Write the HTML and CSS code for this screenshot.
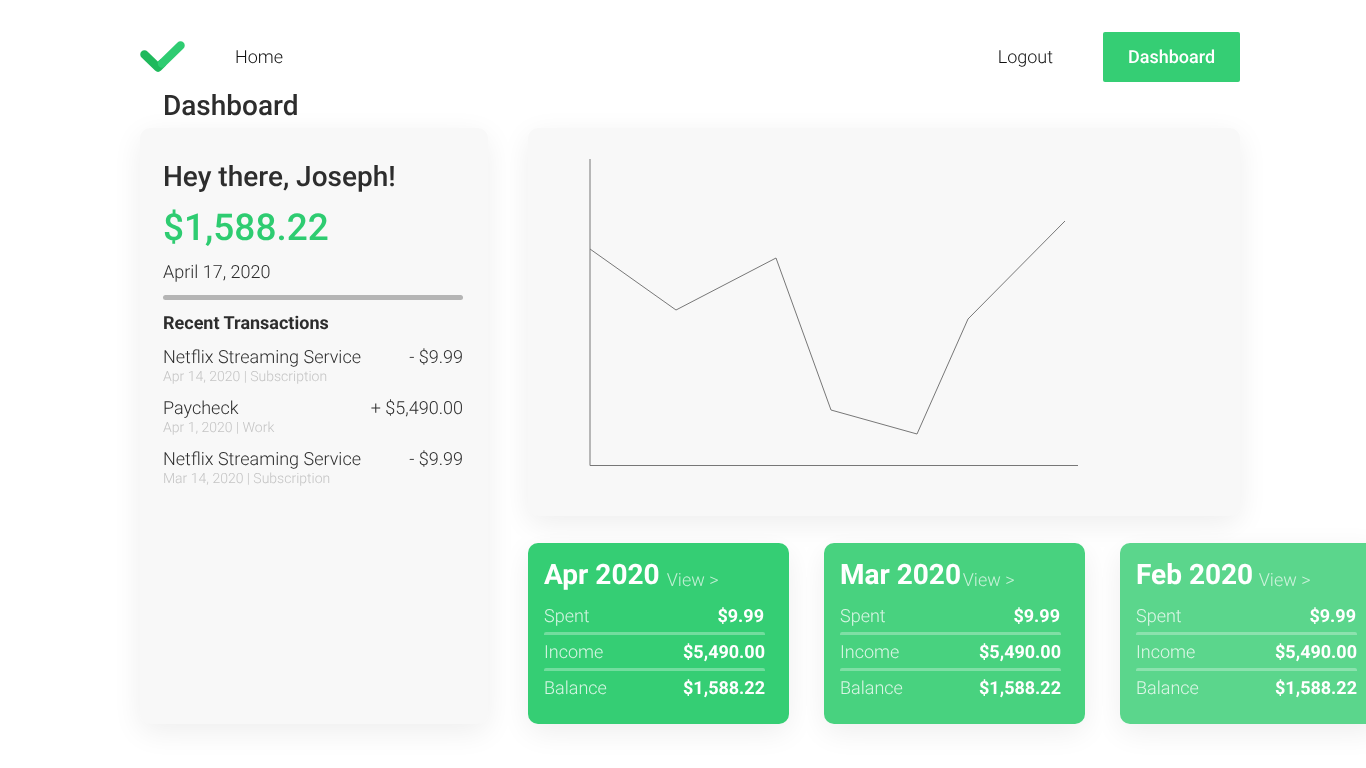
FILE: index.html
```html
<!DOCTYPE html>
<html lang="en">
<head>
    <meta charset="UTF-8">
    <meta name="viewport" content="width=device-width, initial-scale=1.0">
    <title>Dashboard</title>
    <link rel="stylesheet" href="styles.css">
</head>
<body>
    <div class="page">
        <!-- Top navigation -->
        <nav class="nav">
            <svg class="logo" width="45" height="32" viewBox="0 0 45 32">
                <path d="M4.5 14.5 L18 27.5 L22 23.5" fill="none" stroke="#1fb95c" stroke-width="8.5" stroke-linecap="round" stroke-linejoin="round"/>
                <path d="M22 23.5 L40.5 5.5" fill="none" stroke="#2ecc71" stroke-width="8.5" stroke-linecap="round"/>
            </svg>
            <a class="nav-link" href="#">Home</a>
            <a class="nav-link logout" href="#">Logout</a>
            <a class="nav-button" href="#">Dashboard</a>
        </nav>

        <h1 class="page-title">Dashboard</h1>

        <div class="columns">
            <!-- Left summary -->
            <section class="card summary">
                <h2 class="greeting">Hey there, Joseph!</h2>
                <div class="total">$1,588.22</div>
                <div class="date">April 17, 2020</div>
                <div class="rule"></div>
                <h3 class="recent">Recent Transactions</h3>
                <div class="transaction">
                    <div class="transaction-row"><span>Netflix Streaming Service</span><span>- $9.99</span></div>
                    <div class="transaction-meta">Apr 14, 2020 | Subscription</div>
                </div>
                <div class="transaction">
                    <div class="transaction-row"><span>Paycheck</span><span>+ $5,490.00</span></div>
                    <div class="transaction-meta">Apr 1, 2020 | Work</div>
                </div>
                <div class="transaction">
                    <div class="transaction-row"><span>Netflix Streaming Service</span><span>- $9.99</span></div>
                    <div class="transaction-meta">Mar 14, 2020 | Subscription</div>
                </div>
            </section>

            <div class="main">
                <!-- Chart -->
                <section class="card chart">
                    <svg class="chart-svg" width="712" height="388" viewBox="0 0 712 388">
                        <path d="M62 31 V337.5 H550" fill="none" stroke="#777" stroke-width="1"/>
                        <polyline points="62,121 148,182 248,130 303,282 389,306 440,191 537,93" fill="none" stroke="#777" stroke-width="1"/>
                    </svg>
                </section>

                <!-- Month cards -->
                <div class="months">
                    <section class="month month-apr">
                        <div class="month-head"><span class="month-name">Apr 2020</span><a class="month-view" href="#">View &gt;</a></div>
                        <div class="month-row"><span>Spent</span><b>$9.99</b></div>
                        <div class="month-row"><span>Income</span><b>$5,490.00</b></div>
                        <div class="month-row"><span>Balance</span><b>$1,588.22</b></div>
                    </section>
                    <section class="month month-mar">
                        <div class="month-head"><span class="month-name">Mar 2020</span><a class="month-view" href="#">View &gt;</a></div>
                        <div class="month-row"><span>Spent</span><b>$9.99</b></div>
                        <div class="month-row"><span>Income</span><b>$5,490.00</b></div>
                        <div class="month-row"><span>Balance</span><b>$1,588.22</b></div>
                    </section>
                    <section class="month month-feb">
                        <div class="month-head"><span class="month-name">Feb 2020</span><a class="month-view" href="#">View &gt;</a></div>
                        <div class="month-row"><span>Spent</span><b>$9.99</b></div>
                        <div class="month-row"><span>Income</span><b>$5,490.00</b></div>
                        <div class="month-row"><span>Balance</span><b>$1,588.22</b></div>
                    </section>
                </div>
            </div>
        </div>
    </div>
</body>
</html>
```

FILE: styles.css
```css
html, body {
    margin: 0;
    padding: 0;
    background-color: #fff;
    overflow: hidden;
    height: 768px;
}

body {
    font-family: Roboto, "Liberation Sans", sans-serif;
    color: #2d2d2d;
    text-rendering: geometricPrecision;
}

.page {
    width: 1100px;
    margin-left: 140px;
    will-change: transform;
}

.nav {
    display: flex;
    align-items: center;
    height: 50px;
    padding-top: 32px;
}

.logo {
    display: block;
    margin-top: -2px;
}

.nav-link {
    font-size: 18px;
    font-weight: 300;
    color: #111;
    text-decoration: none;
    margin-left: 50px;
}

.logout {
    margin-left: auto;
}

.nav-button {
    display: flex;
    align-items: center;
    justify-content: center;
    width: 137px;
    height: 50px;
    margin-left: 50px;
    background-color: #35ce74;
    border-radius: 2px;
    color: #fff;
    font-size: 18px;
    font-weight: 500;
    text-decoration: none;
}

.page-title {
    margin: 8px 0 6px 23px;
    font-size: 28px;
    line-height: 32px;
    font-weight: 500;
}

.columns {
    display: flex;
    gap: 40px;
}

.card {
    background-color: #f8f8f8;
    border-radius: 10px;
    box-shadow: 0 8px 30px rgba(0, 0, 0, 0.07);
}

.summary {
    box-sizing: border-box;
    width: 348px;
    height: 596px;
    padding: 33px 25px 0 23px;
}

.greeting {
    margin: 0;
    font-size: 28px;
    line-height: 32px;
    font-weight: 500;
}

.total {
    margin-top: 13px;
    font-size: 37px;
    line-height: 46px;
    font-weight: 500;
    color: #2ecc71;
}

.date {
    margin-top: 10px;
    font-size: 18px;
    line-height: 22px;
    font-weight: 300;
}

.rule {
    height: 5px;
    margin-top: 11px;
    background-color: #b5b5b5;
    border-radius: 3px;
}

.recent {
    margin: 14px 0 0;
    font-size: 18px;
    line-height: 20px;
    font-weight: 700;
}

.transaction {
    margin-top: 13px;
}

.transaction + .transaction {
    margin-top: 12px;
}

.transaction-row {
    display: flex;
    justify-content: space-between;
    font-size: 18px;
    line-height: 22px;
    font-weight: 300;
}

.transaction-meta {
    margin-top: -1px;
    font-size: 14px;
    line-height: 18px;
    font-weight: 300;
    color: #c4c4c4;
}

.main {
    width: 712px;
}

.chart {
    height: 388px;
}

.chart-svg {
    display: block;
}

.months {
    display: flex;
    gap: 35px;
    margin-top: 27px;
}

.month {
    flex: none;
    box-sizing: border-box;
    width: 261px;
    height: 181px;
    padding: 14px 24px 0 16px;
    border-radius: 10px;
    color: #fff;
    box-shadow: 0 8px 30px rgba(0, 0, 0, 0.07);
}

.month-apr {
    background-color: #35ce74;
}

.month-mar {
    background-color: #48d27f;
}

.month-feb {
    background-color: #5bd68c;
}

.month-head {
    display: flex;
    justify-content: space-between;
    align-items: flex-end;
    width: 174.5px;
    height: 36px;
    margin-bottom: 6px;
}

.month-name {
    font-size: 28px;
    line-height: 36px;
    font-weight: 700;
}

.month-view {
    margin-bottom: 2px;
    font-size: 18px;
    line-height: 21px;
    font-weight: 300;
    color: rgba(255, 255, 255, 0.7);
    text-decoration: none;
}

.month-row {
    display: flex;
    justify-content: space-between;
    align-items: center;
    height: 31px;
    padding-top: 2px;
    font-size: 18px;
}

.month-row + .month-row {
    border-top: 3px solid rgba(255, 255, 255, 0.3);
    border-radius: 2px;
}

.month-head + .month-row b {
    margin-right: 1px;
}

.month-row span {
    font-weight: 300;
    color: rgba(255, 255, 255, 0.8);
}

.month-row b {
    font-weight: 700;
}
```
